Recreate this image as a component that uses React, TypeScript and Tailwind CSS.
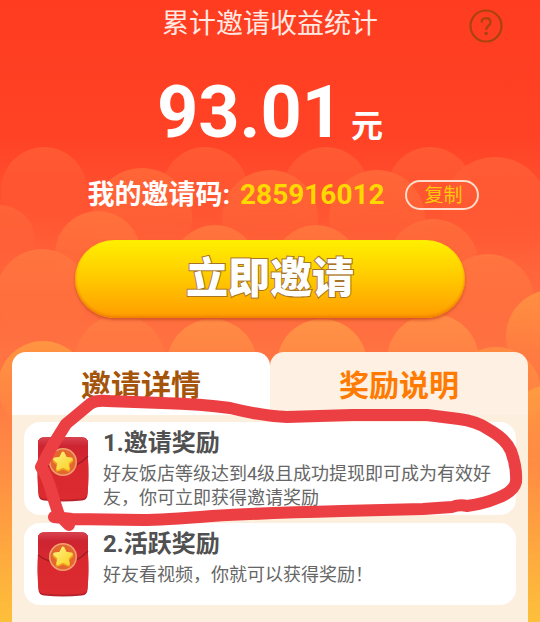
const clouds = [
  { cx: 44, cy: 190, r: 43, fill: "#ff5a33" },
  { cx: 205, cy: 190, r: 43, fill: "#ff5a33" },
  { cx: 326, cy: 190, r: 43, fill: "#ff5a33" },
  { cx: 430, cy: 190, r: 43, fill: "#ff5a33" },
  { cx: 495, cy: 210, r: 53, fill: "#ff5c35" },
  { cx: 142, cy: 218, r: 50, fill: "#ff6637" },
  { cx: 270, cy: 218, r: 48, fill: "#ff6637" },
  { cx: 377, cy: 218, r: 48, fill: "#ff6637" },
  { cx: 0, cy: 240, r: 35, fill: "#ff6338" },
  { cx: 98, cy: 254, r: 43, fill: "#ff713c" },
  { cx: 215, cy: 268, r: 43, fill: "#ff743d" },
  { cx: 316, cy: 268, r: 43, fill: "#ff743d" },
  { cx: 433, cy: 265, r: 46, fill: "#ff6b3b" },
  { cx: 42, cy: 295, r: 46, fill: "#ff743f" },
  { cx: 488, cy: 300, r: 46, fill: "#ff7440" },
  { cx: 120, cy: 360, r: 45, fill: "#ff7a43" },
  { cx: 212, cy: 364, r: 45, fill: "#ff8b45" },
  { cx: 322, cy: 364, r: 45, fill: "#ff9346" },
  { cx: 433, cy: 360, r: 46, fill: "#ff8b46" },
  { cx: 552, cy: 336, r: 46, fill: "#ff8e42" },
  { cx: 43, cy: 386, r: 45, fill: "#ff9542" },
  { cx: 496, cy: 392, r: 45, fill: "#ff8c42" },
  { cx: 550, cy: 427, r: 42, fill: "#ff9a42" },
];

const rewards = [
  {
    title: "1.邀请奖励",
    text: "好友饭店等级达到4级且成功提现即可成为有效好友，你可立即获得邀请奖励",
  },
  {
    title: "2.活跃奖励",
    text: "好友看视频，你就可以获得奖励！",
  },
];

function Clouds() {
  return (
    <svg
      viewBox="0 0 540 622"
      preserveAspectRatio="xMidYMin slice"
      className="absolute inset-0 h-full w-full"
      aria-hidden="true"
    >
      <defs>
        <linearGradient id="sky" x1="0" y1="0" x2="0" y2="1">
          <stop offset="0" stopColor="#ff3c20" />
          <stop offset="0.22" stopColor="#ff4225" />
          <stop offset="0.32" stopColor="#ff5130" />
          <stop offset="0.42" stopColor="#ff6239" />
          <stop offset="0.5" stopColor="#ff6c3e" />
          <stop offset="0.6" stopColor="#ff7543" />
          <stop offset="0.75" stopColor="#ff8c44" />
          <stop offset="1" stopColor="#fdc03a" />
        </linearGradient>
        <linearGradient id="fade" x1="0" y1="0" x2="0" y2="1">
          <stop offset="0" stopColor="#fff" />
          <stop offset="0.3" stopColor="#fff" stopOpacity="0.8" />
          <stop offset="1" stopColor="#fff" stopOpacity="0" />
        </linearGradient>
        <mask id="cloudMask" maskContentUnits="objectBoundingBox">
          <rect width="1" height="1" fill="url(#fade)" />
        </mask>
      </defs>
      <rect width="540" height="622" fill="url(#sky)" />
      {clouds.map((c) => (
        <circle key={`${c.cx}-${c.cy}`} {...c} mask="url(#cloudMask)" />
      ))}
    </svg>
  );
}

function RedPacket() {
  return (
    <svg viewBox="0 0 52 66" className="h-[66px] w-[52px] shrink-0" aria-hidden="true">
      <defs>
        <linearGradient id="packet" x1="0" y1="0" x2="0" y2="1">
          <stop offset="0" stopColor="#cf2b38" />
          <stop offset="0.3" stopColor="#d8272e" />
          <stop offset="1" stopColor="#dd2c30" />
        </linearGradient>
        <linearGradient id="flap" x1="0" y1="0" x2="0" y2="1">
          <stop offset="0" stopColor="#d84550" />
          <stop offset="0.3" stopColor="#cc2431" />
          <stop offset="1" stopColor="#da2932" />
        </linearGradient>
        <linearGradient id="star" x1="0" y1="0" x2="1" y2="1">
          <stop offset="0" stopColor="#fdf07a" />
          <stop offset="1" stopColor="#fbd22c" />
        </linearGradient>
      </defs>
      <path
        d="M6 1.500Q26 .5 46 1.500Q51 2 51 7V23Q52 43 50.500 59Q50 64 45 64.500Q26 66.500 7 64.500Q2 64 1.500 59Q0 42 1 23V7Q1 2 6 1.500Z"
        fill="#b9222b"
      />
      <path
        d="M6 1.500Q26 .5 46 1.500Q51 2 51 7V23Q52 42 50.500 57Q50 62 45 62.500Q26 64.500 7 62.500Q2 62 1.500 57Q0 41 1 23V7Q1 2 6 1.500Z"
        fill="url(#packet)"
      />
      <path
        d="M6 1.500Q26 .5 46 1.500Q51 2 51 7V21Q40 32 26 32Q12 32 1 24V7Q1 2 6 1.500Z"
        fill="url(#flap)"
      />
      <path d="M1 24Q11 32 26 32Q40 32 51 20" fill="none" stroke="#9c1c25" strokeWidth="1.200" />
      <circle cx="26" cy="26" r="14" fill="#f3a070" />
      <circle cx="26" cy="26" r="12.500" fill="#e4682e" />
      <path
        d="M26 18L28.800 23.500L34.800 24.400L30.500 28.600L31.500 34L26 31.800L20.500 34L21.500 28.600L17.200 24.400L23.200 23.500Z"
        fill="#f0a01e"
        stroke="#f0a01e"
        strokeWidth="3.500"
        strokeLinejoin="round"
      />
      <path
        d="M26 17L28.600 22.200L34.400 23L30.200 27.100L31.200 32.800L26 30.100L20.800 32.800L21.800 27.100L17.600 23L23.400 22.200Z"
        fill="url(#star)"
        stroke="url(#star)"
        strokeWidth="2.800"
        strokeLinejoin="round"
      />
    </svg>
  );
}

function Marker() {
  return (
    <svg
      viewBox="0 0 516 270"
      className="pointer-events-none absolute top-0 left-0 w-full"
      fill="none"
      stroke="#ec3f44"
      strokeWidth="12"
      strokeLinecap="round"
      strokeLinejoin="round"
      aria-hidden="true"
    >
      <path d="M57 173L47 163Q43 152 39 138Q35 124 29 115L39 96L54 72L78 52Q84 48 95 49L150 51Q190 52 218 56Q250 64 275 65L340 63L415 63L447 67Q464 69 476 77Q494 87 499 99Q505 115 504 130Q502 139 488 145Q472 152 455 154Q448 152 440 155L411 157L330 159Q250 161 200 164Q150 168 130 168L60 167L42 165" />
    </svg>
  );
}

export default function App() {
  return (
    <div className="relative min-h-screen overflow-hidden bg-[#fdc03a] font-['Roboto','Noto_Sans_CJK_SC',sans-serif]">
      <Clouds />
      <main className="relative">
        <header className="grid grid-cols-[1fr_auto_1fr] items-start pt-[9px]">
          <h1 className="col-start-2 text-[27px] leading-[30px] text-[#ffe9e2]">
            累计邀请收益统计
          </h1>
          <button
            type="button"
            aria-label="帮助"
            className="mr-[37px] justify-self-end text-[#a9430f]"
          >
            <svg viewBox="0 0 34 34" className="size-[34px]" fill="none" stroke="currentColor">
              <circle cx="17" cy="17" r="15.500" strokeWidth="2.200" />
              <path
                d="M12.500 13.500Q12.700 9.300 17 9.200Q21.500 9.300 21.500 13.200Q21.500 15.400 19.200 17Q17.200 18.400 17.200 21"
                strokeWidth="2.200"
              />
              <circle cx="17.200" cy="24.500" r="1.800" fill="currentColor" stroke="none" />
            </svg>
          </button>
        </header>

        <p className="mt-[30px] text-center text-[72px] leading-[80px] font-bold text-white">
          93.01
          <span className="ml-2 text-[32px] leading-none">元</span>
        </p>

        <div className="mt-[27px] flex items-center justify-center pl-[26px] font-bold">
          <span className="text-[27px] leading-[30px] text-white">我的邀请码:</span>
          <span className="ml-[10px] text-[28px] leading-[30px] text-[#ffd800]">285916012</span>
          <button
            type="button"
            className="ml-5 h-[30px] w-[74px] rounded-full border-2 border-[#ffdccb] pl-1 text-[19px] leading-none font-normal text-[#ffc80a]"
          >
            复制
          </button>
        </div>

        <div className="mt-[30px] px-[75px]">
          <button
            type="button"
            className="h-[78px] w-full rounded-full bg-linear-to-b from-[#fff000] via-[#ffc800] to-[#ff9c00] text-[42px] leading-none font-black text-white shadow-[0_2px_3px_#d4552a,inset_0_-2px_3px_#f08000] [-webkit-text-stroke:2px_#a87428] [paint-order:stroke_fill]"
          >
            立即邀请
          </button>
        </div>

        <section className="relative mx-3 mt-[34px]">
          <div role="tablist" className="flex text-[30px] leading-[32px] font-bold">
            <button
              type="button"
              role="tab"
              aria-selected="true"
              className="h-[63px] flex-1 rounded-t-[14px] bg-white pt-1 text-[#a5540c]"
            >
              邀请详情
            </button>
            <button
              type="button"
              role="tab"
              aria-selected="false"
              className="h-[63px] flex-1 rounded-t-[14px] bg-[#fef0e2] pt-1 text-[#ff7a00]"
            >
              奖励说明
            </button>
          </div>
          <ul className="flex flex-col gap-2 bg-[#fdefde] px-3 pt-[7px] pb-[17px]">
            {rewards.map((reward) => (
              <li
                key={reward.title}
                className="flex min-h-[82px] items-center gap-[14px] rounded-2xl bg-white pr-5 pl-[13px]"
              >
                <RedPacket />
                <div className="self-start pt-[6px] pb-[5px]">
                  <h2 className="text-[24px] leading-[30px] font-bold text-[#505050]">
                    {reward.title}
                  </h2>
                  <p className="mt-1 text-[18px] leading-[24px] text-[#666666]">{reward.text}</p>
                </div>
              </li>
            ))}
          </ul>
          <Marker />
        </section>
      </main>
    </div>
  );
}
